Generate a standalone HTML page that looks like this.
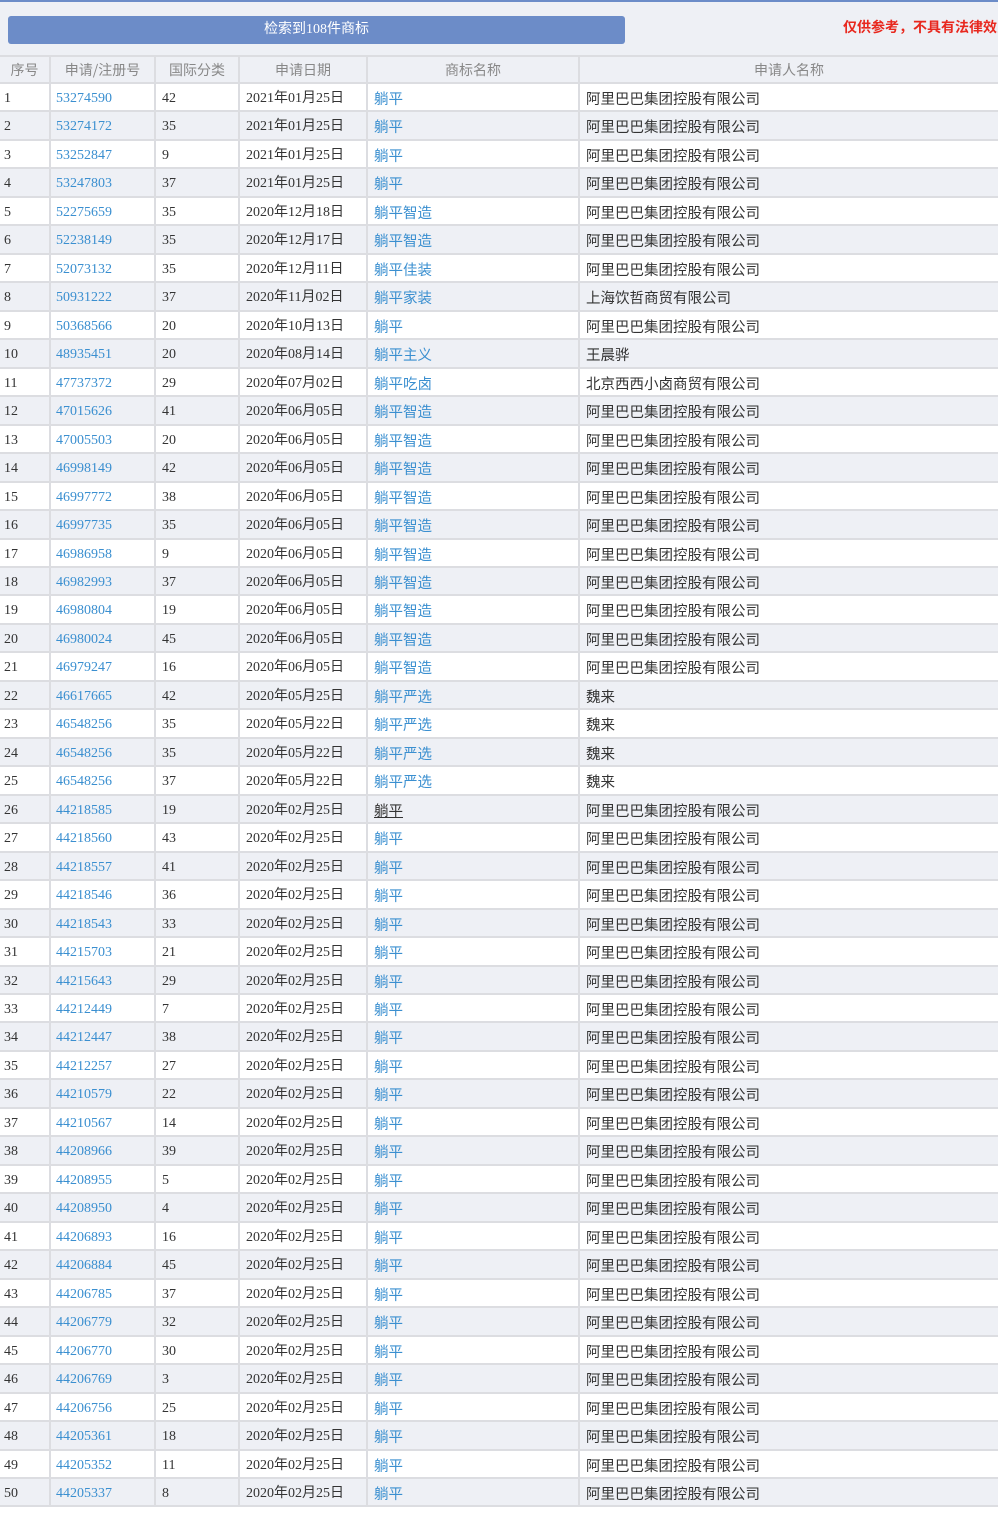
<!DOCTYPE html>
<html><head><meta charset="utf-8">
<style>
*{margin:0;padding:0;box-sizing:border-box}
html,body{width:998px;height:1520px;background:#fff;overflow:hidden}
body{font-family:"Liberation Serif","Noto Sans CJK SC",serif;font-size:14px;color:#333;position:relative}
.top{position:absolute;left:0;top:0;width:998px;height:56px;background:#eef0f5;border-top:2px solid #6c8cc8}
.btn{position:absolute;left:8px;top:14px;width:617px;height:28px;background:#6c8cc8;border-radius:3px;color:#fff;text-align:center;line-height:28px;font-size:14px;font-family:"Liberation Serif","Noto Sans CJK SC",sans-serif}
.note{position:absolute;left:843px;top:15px;color:#e8281e;font-weight:bold;font-size:14px;white-space:nowrap;font-family:"Noto Sans CJK SC",sans-serif}
.tbl{position:absolute;left:0;top:55px;width:998px}
.r{display:flex;height:28.48px;border-bottom:2px solid #dcdde1;background:#fff}
.r:nth-child(odd){background:#eef0f5}
.h{height:29px;background:#eef0f5;border-top:2px solid #dcdde1}
.r div{border-right:2px solid #dcdde1;line-height:30px;padding-left:4px;white-space:nowrap;overflow:hidden}
.h div{line-height:27px}
.r div:last-child{border-right:none}
.c1{width:51px}.c2{width:105px}.c3{width:84px}.c4{width:128px}.c5{width:212px}.c6{flex:1}
.h div{text-align:center;padding-left:0;color:#888;font-family:"Noto Sans CJK SC",sans-serif;font-size:14px}
.c2{color:#3a8fd0;padding-left:5px!important}
.c5{color:#3a8fd0;font-family:"Noto Sans CJK SC",sans-serif;padding-left:6px!important;font-size:14.5px}
.c6{font-family:"Noto Sans CJK SC",sans-serif;padding-left:6px!important;font-size:14.5px}
.c3{padding-left:6px!important}.c4{padding-left:6px!important}
.dk{color:#333;text-decoration:underline}
</style></head><body>
<div class="top"><div class="btn">检索到108件商标</div><div class="note">仅供参考，不具有法律效力</div></div>
<div class="tbl">
<div class="r h"><div class="c1">序号</div><div class="c2" style="color:#888;padding-left:0!important">申请/注册号</div><div class="c3" style="padding-left:0!important">国际分类</div><div class="c4" style="padding-left:0!important">申请日期</div><div class="c5" style="color:#888;padding-left:0!important;font-size:14px">商标名称</div><div class="c6" style="padding-left:0!important;font-size:14px">申请人名称</div></div>
<div class="r"><div class="c1">1</div><div class="c2">53274590</div><div class="c3">42</div><div class="c4">2021年01月25日</div><div class="c5">躺平</div><div class="c6">阿里巴巴集团控股有限公司</div></div>
<div class="r"><div class="c1">2</div><div class="c2">53274172</div><div class="c3">35</div><div class="c4">2021年01月25日</div><div class="c5">躺平</div><div class="c6">阿里巴巴集团控股有限公司</div></div>
<div class="r"><div class="c1">3</div><div class="c2">53252847</div><div class="c3">9</div><div class="c4">2021年01月25日</div><div class="c5">躺平</div><div class="c6">阿里巴巴集团控股有限公司</div></div>
<div class="r"><div class="c1">4</div><div class="c2">53247803</div><div class="c3">37</div><div class="c4">2021年01月25日</div><div class="c5">躺平</div><div class="c6">阿里巴巴集团控股有限公司</div></div>
<div class="r"><div class="c1">5</div><div class="c2">52275659</div><div class="c3">35</div><div class="c4">2020年12月18日</div><div class="c5">躺平智造</div><div class="c6">阿里巴巴集团控股有限公司</div></div>
<div class="r"><div class="c1">6</div><div class="c2">52238149</div><div class="c3">35</div><div class="c4">2020年12月17日</div><div class="c5">躺平智造</div><div class="c6">阿里巴巴集团控股有限公司</div></div>
<div class="r"><div class="c1">7</div><div class="c2">52073132</div><div class="c3">35</div><div class="c4">2020年12月11日</div><div class="c5">躺平佳装</div><div class="c6">阿里巴巴集团控股有限公司</div></div>
<div class="r"><div class="c1">8</div><div class="c2">50931222</div><div class="c3">37</div><div class="c4">2020年11月02日</div><div class="c5">躺平家装</div><div class="c6">上海饮哲商贸有限公司</div></div>
<div class="r"><div class="c1">9</div><div class="c2">50368566</div><div class="c3">20</div><div class="c4">2020年10月13日</div><div class="c5">躺平</div><div class="c6">阿里巴巴集团控股有限公司</div></div>
<div class="r"><div class="c1">10</div><div class="c2">48935451</div><div class="c3">20</div><div class="c4">2020年08月14日</div><div class="c5">躺平主义</div><div class="c6">王晨骅</div></div>
<div class="r"><div class="c1">11</div><div class="c2">47737372</div><div class="c3">29</div><div class="c4">2020年07月02日</div><div class="c5">躺平吃卤</div><div class="c6">北京西西小卤商贸有限公司</div></div>
<div class="r"><div class="c1">12</div><div class="c2">47015626</div><div class="c3">41</div><div class="c4">2020年06月05日</div><div class="c5">躺平智造</div><div class="c6">阿里巴巴集团控股有限公司</div></div>
<div class="r"><div class="c1">13</div><div class="c2">47005503</div><div class="c3">20</div><div class="c4">2020年06月05日</div><div class="c5">躺平智造</div><div class="c6">阿里巴巴集团控股有限公司</div></div>
<div class="r"><div class="c1">14</div><div class="c2">46998149</div><div class="c3">42</div><div class="c4">2020年06月05日</div><div class="c5">躺平智造</div><div class="c6">阿里巴巴集团控股有限公司</div></div>
<div class="r"><div class="c1">15</div><div class="c2">46997772</div><div class="c3">38</div><div class="c4">2020年06月05日</div><div class="c5">躺平智造</div><div class="c6">阿里巴巴集团控股有限公司</div></div>
<div class="r"><div class="c1">16</div><div class="c2">46997735</div><div class="c3">35</div><div class="c4">2020年06月05日</div><div class="c5">躺平智造</div><div class="c6">阿里巴巴集团控股有限公司</div></div>
<div class="r"><div class="c1">17</div><div class="c2">46986958</div><div class="c3">9</div><div class="c4">2020年06月05日</div><div class="c5">躺平智造</div><div class="c6">阿里巴巴集团控股有限公司</div></div>
<div class="r"><div class="c1">18</div><div class="c2">46982993</div><div class="c3">37</div><div class="c4">2020年06月05日</div><div class="c5">躺平智造</div><div class="c6">阿里巴巴集团控股有限公司</div></div>
<div class="r"><div class="c1">19</div><div class="c2">46980804</div><div class="c3">19</div><div class="c4">2020年06月05日</div><div class="c5">躺平智造</div><div class="c6">阿里巴巴集团控股有限公司</div></div>
<div class="r"><div class="c1">20</div><div class="c2">46980024</div><div class="c3">45</div><div class="c4">2020年06月05日</div><div class="c5">躺平智造</div><div class="c6">阿里巴巴集团控股有限公司</div></div>
<div class="r"><div class="c1">21</div><div class="c2">46979247</div><div class="c3">16</div><div class="c4">2020年06月05日</div><div class="c5">躺平智造</div><div class="c6">阿里巴巴集团控股有限公司</div></div>
<div class="r"><div class="c1">22</div><div class="c2">46617665</div><div class="c3">42</div><div class="c4">2020年05月25日</div><div class="c5">躺平严选</div><div class="c6">魏来</div></div>
<div class="r"><div class="c1">23</div><div class="c2">46548256</div><div class="c3">35</div><div class="c4">2020年05月22日</div><div class="c5">躺平严选</div><div class="c6">魏来</div></div>
<div class="r"><div class="c1">24</div><div class="c2">46548256</div><div class="c3">35</div><div class="c4">2020年05月22日</div><div class="c5">躺平严选</div><div class="c6">魏来</div></div>
<div class="r"><div class="c1">25</div><div class="c2">46548256</div><div class="c3">37</div><div class="c4">2020年05月22日</div><div class="c5">躺平严选</div><div class="c6">魏来</div></div>
<div class="r"><div class="c1">26</div><div class="c2">44218585</div><div class="c3">19</div><div class="c4">2020年02月25日</div><div class="c5"><span class="dk">躺平</span></div><div class="c6">阿里巴巴集团控股有限公司</div></div>
<div class="r"><div class="c1">27</div><div class="c2">44218560</div><div class="c3">43</div><div class="c4">2020年02月25日</div><div class="c5">躺平</div><div class="c6">阿里巴巴集团控股有限公司</div></div>
<div class="r"><div class="c1">28</div><div class="c2">44218557</div><div class="c3">41</div><div class="c4">2020年02月25日</div><div class="c5">躺平</div><div class="c6">阿里巴巴集团控股有限公司</div></div>
<div class="r"><div class="c1">29</div><div class="c2">44218546</div><div class="c3">36</div><div class="c4">2020年02月25日</div><div class="c5">躺平</div><div class="c6">阿里巴巴集团控股有限公司</div></div>
<div class="r"><div class="c1">30</div><div class="c2">44218543</div><div class="c3">33</div><div class="c4">2020年02月25日</div><div class="c5">躺平</div><div class="c6">阿里巴巴集团控股有限公司</div></div>
<div class="r"><div class="c1">31</div><div class="c2">44215703</div><div class="c3">21</div><div class="c4">2020年02月25日</div><div class="c5">躺平</div><div class="c6">阿里巴巴集团控股有限公司</div></div>
<div class="r"><div class="c1">32</div><div class="c2">44215643</div><div class="c3">29</div><div class="c4">2020年02月25日</div><div class="c5">躺平</div><div class="c6">阿里巴巴集团控股有限公司</div></div>
<div class="r"><div class="c1">33</div><div class="c2">44212449</div><div class="c3">7</div><div class="c4">2020年02月25日</div><div class="c5">躺平</div><div class="c6">阿里巴巴集团控股有限公司</div></div>
<div class="r"><div class="c1">34</div><div class="c2">44212447</div><div class="c3">38</div><div class="c4">2020年02月25日</div><div class="c5">躺平</div><div class="c6">阿里巴巴集团控股有限公司</div></div>
<div class="r"><div class="c1">35</div><div class="c2">44212257</div><div class="c3">27</div><div class="c4">2020年02月25日</div><div class="c5">躺平</div><div class="c6">阿里巴巴集团控股有限公司</div></div>
<div class="r"><div class="c1">36</div><div class="c2">44210579</div><div class="c3">22</div><div class="c4">2020年02月25日</div><div class="c5">躺平</div><div class="c6">阿里巴巴集团控股有限公司</div></div>
<div class="r"><div class="c1">37</div><div class="c2">44210567</div><div class="c3">14</div><div class="c4">2020年02月25日</div><div class="c5">躺平</div><div class="c6">阿里巴巴集团控股有限公司</div></div>
<div class="r"><div class="c1">38</div><div class="c2">44208966</div><div class="c3">39</div><div class="c4">2020年02月25日</div><div class="c5">躺平</div><div class="c6">阿里巴巴集团控股有限公司</div></div>
<div class="r"><div class="c1">39</div><div class="c2">44208955</div><div class="c3">5</div><div class="c4">2020年02月25日</div><div class="c5">躺平</div><div class="c6">阿里巴巴集团控股有限公司</div></div>
<div class="r"><div class="c1">40</div><div class="c2">44208950</div><div class="c3">4</div><div class="c4">2020年02月25日</div><div class="c5">躺平</div><div class="c6">阿里巴巴集团控股有限公司</div></div>
<div class="r"><div class="c1">41</div><div class="c2">44206893</div><div class="c3">16</div><div class="c4">2020年02月25日</div><div class="c5">躺平</div><div class="c6">阿里巴巴集团控股有限公司</div></div>
<div class="r"><div class="c1">42</div><div class="c2">44206884</div><div class="c3">45</div><div class="c4">2020年02月25日</div><div class="c5">躺平</div><div class="c6">阿里巴巴集团控股有限公司</div></div>
<div class="r"><div class="c1">43</div><div class="c2">44206785</div><div class="c3">37</div><div class="c4">2020年02月25日</div><div class="c5">躺平</div><div class="c6">阿里巴巴集团控股有限公司</div></div>
<div class="r"><div class="c1">44</div><div class="c2">44206779</div><div class="c3">32</div><div class="c4">2020年02月25日</div><div class="c5">躺平</div><div class="c6">阿里巴巴集团控股有限公司</div></div>
<div class="r"><div class="c1">45</div><div class="c2">44206770</div><div class="c3">30</div><div class="c4">2020年02月25日</div><div class="c5">躺平</div><div class="c6">阿里巴巴集团控股有限公司</div></div>
<div class="r"><div class="c1">46</div><div class="c2">44206769</div><div class="c3">3</div><div class="c4">2020年02月25日</div><div class="c5">躺平</div><div class="c6">阿里巴巴集团控股有限公司</div></div>
<div class="r"><div class="c1">47</div><div class="c2">44206756</div><div class="c3">25</div><div class="c4">2020年02月25日</div><div class="c5">躺平</div><div class="c6">阿里巴巴集团控股有限公司</div></div>
<div class="r"><div class="c1">48</div><div class="c2">44205361</div><div class="c3">18</div><div class="c4">2020年02月25日</div><div class="c5">躺平</div><div class="c6">阿里巴巴集团控股有限公司</div></div>
<div class="r"><div class="c1">49</div><div class="c2">44205352</div><div class="c3">11</div><div class="c4">2020年02月25日</div><div class="c5">躺平</div><div class="c6">阿里巴巴集团控股有限公司</div></div>
<div class="r"><div class="c1">50</div><div class="c2">44205337</div><div class="c3">8</div><div class="c4">2020年02月25日</div><div class="c5">躺平</div><div class="c6">阿里巴巴集团控股有限公司</div></div>
</div>
</body></html>
